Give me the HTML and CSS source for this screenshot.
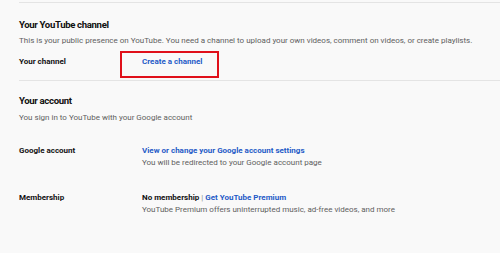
FILE: index.html
```html
<!DOCTYPE html>
<html lang="en">
<head>
    <meta charset="UTF-8">
    <title>Account settings</title>
    <link rel="stylesheet" href="styles.css">
</head>
<body>
    <div class="page">
        <section class="block first">
            <h2>Your YouTube channel</h2>
            <p class="intro">This is your public presence on YouTube. You need a channel to upload your own videos, comment on videos, or create playlists.</p>
            <div class="row channel-row">
                <div class="label">Your channel</div>
                <div class="value">
                    <a class="link" href="#">Create a channel</a>
                    <span class="highlight"></span>
                </div>
            </div>
        </section>

        <section class="block second">
            <h2>Your account</h2>
            <p class="intro">You sign in to YouTube with your Google account</p>
            <div class="row">
                <div class="label">Google account</div>
                <div class="value">
                    <a class="link" href="#">View or change your Google account settings</a>
                    <div class="note">You will be redirected to your Google account page</div>
                </div>
            </div>
            <div class="row">
                <div class="label">Membership</div>
                <div class="value">
                    <span class="plain">No membership</span> <span class="sep">|</span> <a class="link" href="#">Get YouTube Premium</a>
                    <div class="note">YouTube Premium offers uninterrupted music, ad-free videos, and more</div>
                </div>
            </div>
        </section>
    </div>
</body>
</html>
```

FILE: styles.css
```css
body {
    margin: 0;
    background-color: #f9f9f9;
    font-family: Roboto, 'Liberation Sans', sans-serif;
    color: #111;
    height: 253px;
    overflow: hidden;
}
.page {
    padding-left: 19px;
}
.block {
    border-top: 1px solid #e4e4e4;
}
.first {
    margin-top: 2px;
}
h2 {
    font-size: 9.6px;
    font-weight: 700;
    letter-spacing: -0.35px;
    margin: 0;
    padding-top: 15px;
    line-height: 14px;
}
.second h2 {
    padding-top: 13px;
}
.intro {
    font-size: 8px;
    color: #606060;
    margin: 3px 0 0;
    line-height: 11px;
}
.second .intro {
    margin-top: 4px;
}
.row {
    display: flex;
    font-size: 8px;
    line-height: 12px;
}
.label {
    width: 123px;
    font-weight: 700;
    flex-shrink: 0;
}
.value {
    position: relative;
}
.channel-row {
    margin-top: 10px;
    height: 24px;
}
.highlight {
    position: absolute;
    left: -22px;
    top: -5px;
    width: 95px;
    height: 23px;
    border: 2.5px solid #e0101a;
}
.link {
    color: #1f5bc7;
    font-weight: 700;
    text-decoration: none;
}
.plain {
    font-weight: 700;
}
.sep {
    color: #888;
}
.note {
    color: #606060;
}
.second .row {
    margin-top: 22px;
}
.second .row + .row {
    margin-top: 23px;
}
```
